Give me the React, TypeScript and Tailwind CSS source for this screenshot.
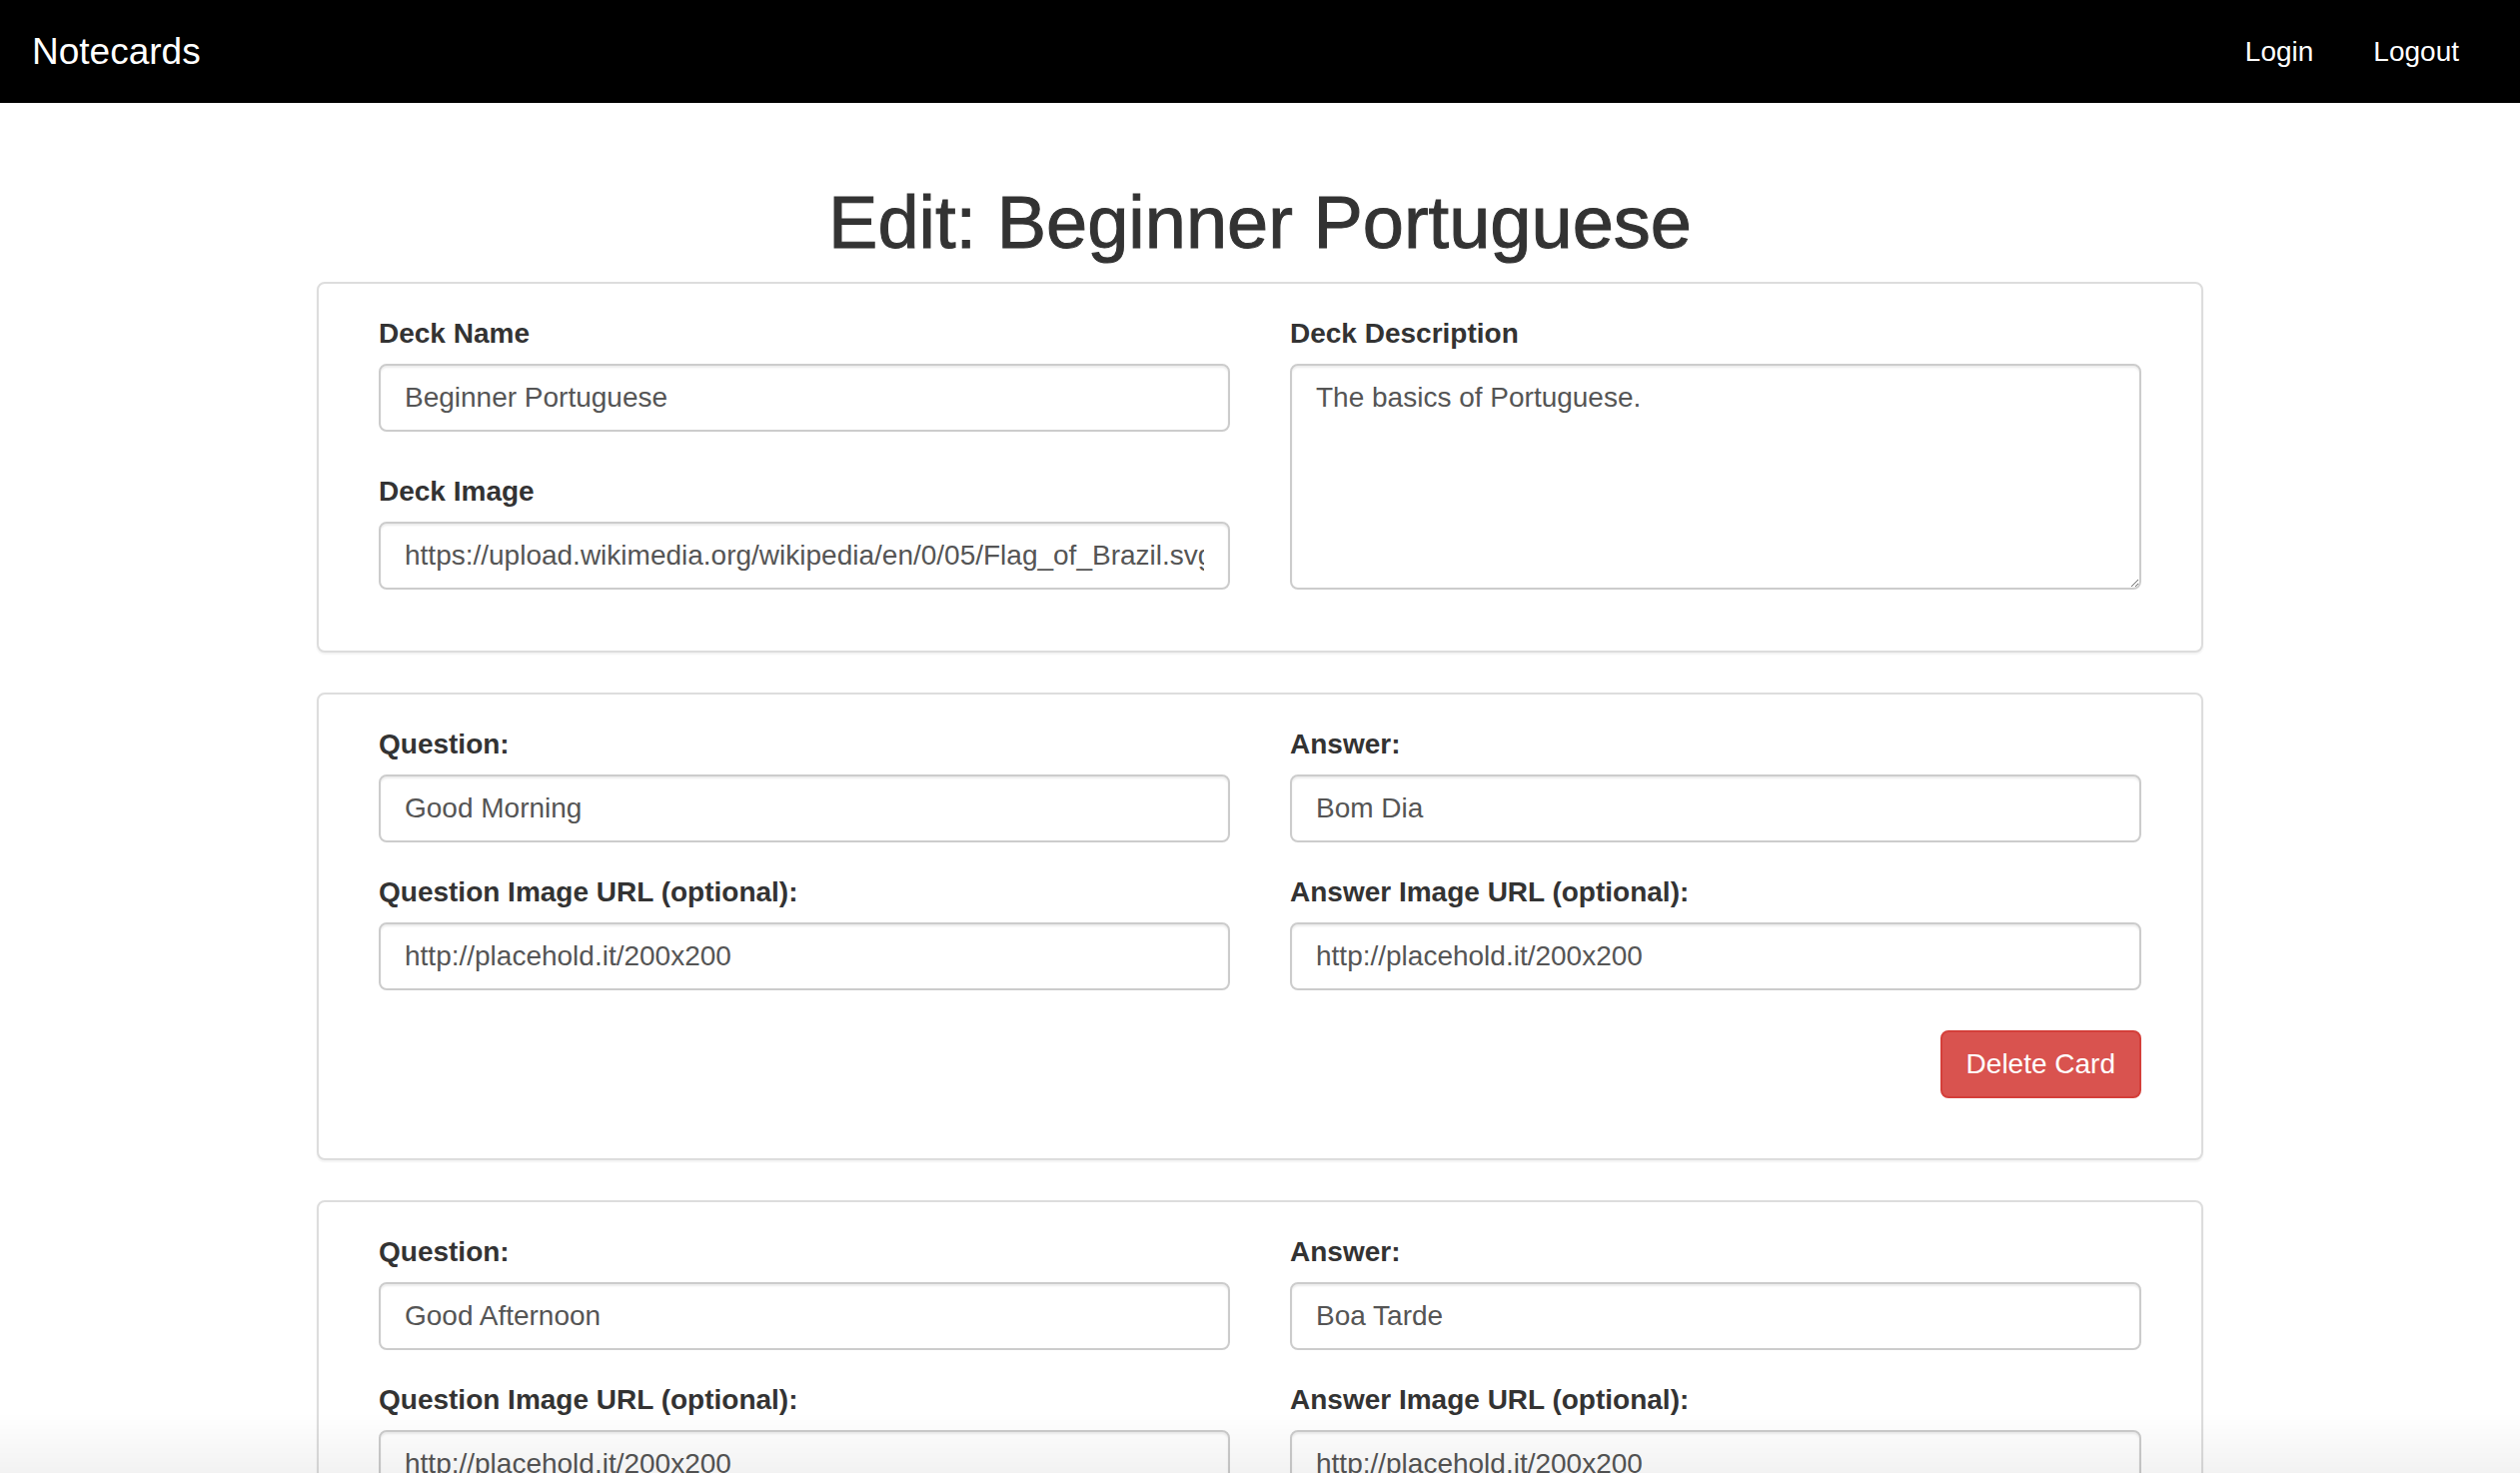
const font = { fontFamily: '"Liberation Sans", Arial, Helvetica, sans-serif' };

function Field({
  label,
  value,
  className = "",
}: {
  label: string;
  value: string;
  className?: string;
}) {
  return (
    <div className={className}>
      <label className="block text-[28px] leading-[40px] font-bold text-[#333] mb-[10px]">
        {label}
      </label>
      <input
        type="text"
        defaultValue={value}
        className="block w-full h-[68px] px-[24px] text-[28px] text-[#555] bg-white border-2 border-[#ccc] rounded-[8px] shadow-[inset_0_2px_2px_rgba(0,0,0,0.075)] outline-none"
      />
    </div>
  );
}

function CardPanel({
  question,
  answer,
  showDelete,
}: {
  question: string;
  answer: string;
  showDelete?: boolean;
}) {
  return (
    <div className="border-2 border-[#ddd] rounded-[8px] bg-white shadow-[0_2px_2px_rgba(0,0,0,0.05)] px-[30px] pt-[30px] pb-[29px] mb-[40px]">
      <div className="grid grid-cols-2">
        <div className="px-[30px]">
          <Field label="Question:" value={question} className="mb-[30px]" />
          <Field label="Question Image URL (optional):" value="http://placehold.it/200x200" className="mb-[30px]" />
        </div>
        <div className="px-[30px]">
          <Field label="Answer:" value={answer} className="mb-[30px]" />
          <Field label="Answer Image URL (optional):" value="http://placehold.it/200x200" className="mb-[30px]" />
        </div>
      </div>
      {showDelete && (
        <div className="flex justify-end px-[30px] pt-[10px] pb-[31px]">
          <button className="h-[68px] px-[24px] text-[28px] text-white bg-[#d9534f] border-2 border-[#d43f3a] rounded-[8px]">
            Delete Card
          </button>
        </div>
      )}
    </div>
  );
}

export default function App() {
  return (
    <div className="min-h-screen bg-white text-[#333]" style={font}>
      <nav className="h-[103px] bg-black flex items-center justify-between pl-[32px] pr-[31px]">
        <span className="text-[37px] text-white leading-none">Notecards</span>
        <div className="flex items-center text-[28px] text-white">
          <a className="px-[30px]">Login</a>
          <a className="px-[30px]">Logout</a>
        </div>
      </nav>

      <main className="w-[1888px] mx-auto">
        <h1 className="mt-[80px] mb-[20px] text-[74px] leading-[79px] font-medium text-center text-[#333] [-webkit-text-stroke:1px_#333]">
          Edit: Beginner Portuguese
        </h1>

        {/* Deck details */}
        <div className="border-2 border-[#ddd] rounded-[8px] bg-white shadow-[0_2px_2px_rgba(0,0,0,0.05)] px-[30px] pt-[30px] pb-[31px] mb-[40px]">
          <div className="grid grid-cols-2">
            <div className="px-[30px]">
              <Field label="Deck Name" value="Beginner Portuguese" className="mb-[40px]" />
              <Field
                label="Deck Image"
                value="https://upload.wikimedia.org/wikipedia/en/0/05/Flag_of_Brazil.svg"
                className="mb-[30px]"
              />
            </div>
            <div className="px-[30px]">
              <label className="block text-[28px] leading-[40px] font-bold text-[#333] mb-[10px]">
                Deck Description
              </label>
              <textarea
                defaultValue="The basics of Portuguese."
                className="block w-full h-[226px] px-[24px] py-[12px] text-[28px] leading-[40px] text-[#555] bg-white border-2 border-[#ccc] rounded-[8px] shadow-[inset_0_2px_2px_rgba(0,0,0,0.075)] outline-none"
              />
            </div>
          </div>
        </div>

        <CardPanel question="Good Morning" answer="Bom Dia" showDelete />
        <CardPanel question="Good Afternoon" answer="Boa Tarde" showDelete />
      </main>

      <div className="fixed bottom-0 left-0 right-0 h-[60px] bg-gradient-to-b from-transparent to-black/[0.05] pointer-events-none" />
    </div>
  );
}
